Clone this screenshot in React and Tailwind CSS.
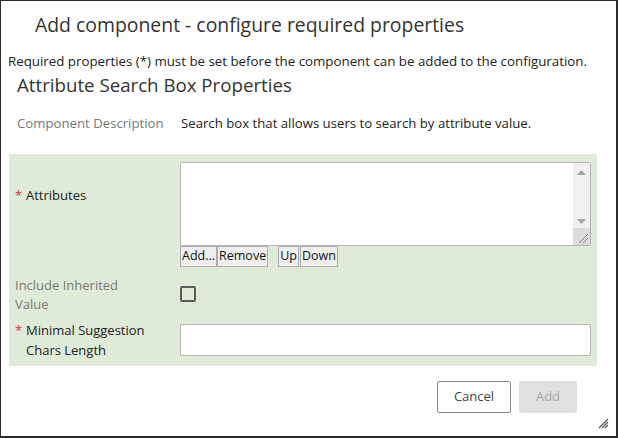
import React from 'react';

const font = { fontFamily: '"Open Sans", "Noto Sans", sans-serif' };

const SmallButton = ({ children }) => (
  <button
    type="button"
    className="h-[21px] px-[1px] border border-[#adadad] bg-[#efefef] text-[12.5px] leading-none text-[#111]"
  >
    {children}
  </button>
);

const App = () => {
  return (
    <div
      style={font}
      className="w-[618px] h-[438px] bg-white border border-[#2b2b2b] border-r-2 border-b-2 relative overflow-hidden text-[#333]"
    >
      <div className="pl-[34px] pt-[10px] h-[44px] text-[19.4px] leading-[28px] text-[#333]">
        Add component - configure required properties
      </div>

      <div className="pl-[7px] pt-[7px] text-[13.3px] leading-[18px] text-[#222]">
        Required properties (*) must be set before the component can be added to the configuration.
      </div>

      <div className="pl-[16px] pt-[2px] text-[18.7px] leading-[26px] text-[#333]">
        Attribute Search Box Properties
      </div>

      <div className="flex items-center pl-[16px] mt-[16px] h-[20px] text-[13.2px]">
        <div className="w-[164px] text-[#777]">Component Description</div>
        <div className="text-[#222]">Search box that allows users to search by attribute value.</div>
      </div>

      <div className="mx-[8px] mt-[20px] w-[588px] h-[212px] bg-[#dfead8] pt-[8px]">
        <div className="grid grid-cols-[171px_411px]">
          <div className="flex items-start pt-[24px] pl-[6px] text-[13px]">
            <span className="text-[#e0264a] w-[11px]">*</span>
            <span className="text-[#222]">Attributes</span>
          </div>
          <div>
            <div className="relative h-[84px] bg-white border border-[#b5b5b5] rounded-[2px]">
              <div className="absolute right-0 top-0 bottom-0 w-[17px] bg-[#f0f0f0] flex flex-col items-center">
                <svg width="9" height="5" viewBox="0 0 9 5" className="mt-[7px]">
                  <path d="M0 5 L4.5 0 L9 5 Z" fill="#a3a3a3" />
                </svg>
                <div className="flex-1" />
                <svg width="9" height="5" viewBox="0 0 9 5" className="mb-[21px]">
                  <path d="M0 0 L4.5 5 L9 0 Z" fill="#a3a3a3" />
                </svg>
                <div className="absolute bottom-0 right-0 w-[17px] h-[17px] bg-[#dcdcdc]">
                  <svg width="17" height="17" viewBox="0 0 17 17">
                    <path d="M6 15 L15 6 M10 15 L15 10" stroke="#888" strokeWidth="1" />
                  </svg>
                </div>
              </div>
            </div>
            <div className="flex items-center">
              <SmallButton>Add...</SmallButton>
              <SmallButton>Remove</SmallButton>
              <div className="w-[10px]" />
              <SmallButton>Up</SmallButton>
              <div className="w-[1px]" />
              <SmallButton>Down</SmallButton>
            </div>
          </div>

          <div className="pl-[6px] pt-[9px] text-[13px] leading-[19px] text-[#7b7b72]">
            Include Inherited
            <br />
            Value
          </div>
          <div className="pt-[19px]">
            <div className="w-[16px] h-[16px] border-2 border-[#5a5a5a] rounded-[2px] bg-[#dfead8]" />
          </div>

          <div className="flex pl-[6px] pt-[6px] text-[13px] leading-[20px]">
            <span className="text-[#e0264a] w-[11px] shrink-0">*</span>
            <span className="text-[#222]">
              Minimal Suggestion
              <br />
              Chars Length
            </span>
          </div>
          <div className="pt-[10px]">
            <div className="h-[32px] bg-white border border-[#b5b5b5] rounded-[2px]" />
          </div>
        </div>
      </div>

      <div className="flex justify-end gap-[8px] pr-[39px] mt-[15px]">
        <button
          type="button"
          className="w-[74px] h-[32px] border border-[#8a8a8a] rounded-[2px] bg-white text-[13px] text-[#444]"
        >
          Cancel
        </button>
        <button
          type="button"
          className="w-[58px] h-[32px] rounded-[2px] bg-[#e0e0e0] text-[13px] text-[#a8a8a8]"
        >
          Add
        </button>
      </div>

      <svg width="12" height="12" viewBox="0 0 12 12" className="absolute right-[7px] bottom-[7px]">
        <path d="M2 11 L11 2 M5 11 L11 5 M8 11 L11 8" stroke="#555" strokeWidth="1.2" />
      </svg>
    </div>
  );
};

export default App;
